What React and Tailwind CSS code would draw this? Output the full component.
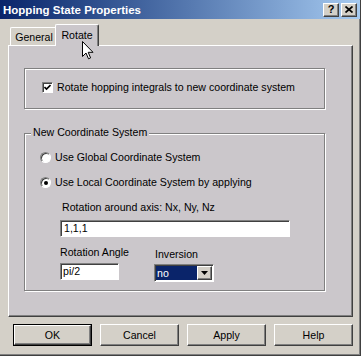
import React from 'react';

const raised =
  'border-t border-l border-white border-r border-b border-r-[#404040] border-b-[#404040] shadow-[inset_-1px_-1px_0_#808080]';
const sunken =
  'border-t border-l border-[#808080] border-r border-b border-r-white border-b-white shadow-[inset_1px_1px_0_#404040]';
const etched =
  'border border-[#808080] shadow-[1px_1px_0_#ffffff,inset_1px_1px_0_#ffffff]';

function TitleButton({ children }) {
  return (
    <div className={`w-[16px] h-[14px] bg-[#d4d0c8] flex items-center justify-center ${raised}`}>
      {children}
    </div>
  );
}

function Checkbox({ checked }) {
  return (
    <span className={`w-[11px] h-[11px] bg-white flex items-center justify-center shrink-0 ${sunken}`}>
      {checked && (
        <svg width="7" height="7" viewBox="0 0 7 7">
          <path d="M0.5 3 L2.5 5 L6.5 1" fill="none" stroke="#000" strokeWidth="1.6" />
        </svg>
      )}
    </span>
  );
}

function Radio({ checked }) {
  return (
    <span className="w-[11px] h-[11px] rounded-full bg-white border border-[#808080] border-r-white border-b-white shadow-[inset_1px_1px_0_#404040] flex items-center justify-center shrink-0">
      {checked && <span className="w-[4px] h-[4px] rounded-full bg-black" />}
    </span>
  );
}

function Button({ children, isDefault }) {
  return (
    <div className={`w-[79px] h-[22px] ${isDefault ? 'border border-black' : ''}`}>
      <div className={`w-full h-full flex items-center justify-center bg-[#d4d0c8] ${raised}`}>
        {children}
      </div>
    </div>
  );
}

export default function App() {
  return (
    <div className="relative w-[361px] h-[356px] overflow-hidden bg-[#d4d0c8] border-r border-b border-[#404040] shadow-[inset_-1px_-1px_0_#808080] flex flex-col font-['Liberation_Sans',Arial,sans-serif] text-[10.6px] leading-[13px] text-black">
      {/* Title bar */}
      <div className="h-[19px] shrink-0 flex items-center justify-between pl-[3px] pr-[3px] bg-linear-to-r from-[#0a246a] to-[#a6caf0]">
        <span className="text-white font-bold text-[11.5px] leading-[14px]">Hopping State Properties</span>
        <div className="flex gap-[2px]">
          <TitleButton>
            <span className="font-bold text-[11px] leading-[11px]">?</span>
          </TitleButton>
          <TitleButton>
            <svg width="8" height="7" viewBox="0 0 8 7">
              <path d="M0.5 0.5 L7.5 6.5 M7.5 0.5 L0.5 6.5" stroke="#000" strokeWidth="1.7" />
            </svg>
          </TitleButton>
        </div>
      </div>

      {/* Tabs */}
      <div className="relative z-10 mt-[5px] ml-[10px] -mb-px flex items-end">
        <div className="w-[47px] h-[18px] mb-px pt-[3px] flex justify-center border-t border-l border-white rounded-tl-[2px] bg-[#d4d0c8]">
          General
        </div>
        <div className="-ml-[2px] w-[44px] h-[22px] pt-[4px] flex justify-center border-t border-l border-white border-r border-r-[#404040] shadow-[inset_-1px_0_0_#808080] rounded-tl-[2px] rounded-tr-[2px] bg-[#cbc7cb]">
          Rotate
        </div>
      </div>

      {/* Panel */}
      <div className="ml-[8px] w-[345px] h-[272px] shrink-0 bg-[#cbc7cb] border-t border-l border-white border-r border-b border-r-[#404040] border-b-[#404040] shadow-[inset_-1px_-1px_0_#808080] flex flex-col">
        <div className={`mt-[22px] ml-[15px] w-[301px] h-[41px] pt-[12px] pl-[17px] ${etched}`}>
          <div className="flex items-center gap-[4px] h-[13px]">
            <Checkbox checked />
            <span>Rotate hopping integrals to new coordinate system</span>
          </div>
        </div>

        <div className={`relative mt-[24px] ml-[15px] w-[301px] h-[158px] pt-[17px] pl-[15px] ${etched}`}>
          <span className="absolute left-[6px] -top-[8px] px-[2px] bg-[#cbc7cb]">New Coordinate System</span>
          <div className="flex items-center gap-[4px] h-[13px]">
            <Radio />
            <span>Use Global Coordinate System</span>
          </div>
          <div className="mt-[12px] flex items-center gap-[4px] h-[13px]">
            <Radio checked />
            <span>Use Local Coordinate System by applying</span>
          </div>
          <div className="mt-[12px] ml-[22px]">Rotation around axis: Nx, Ny, Nz</div>
          <div className={`mt-[6px] ml-[20px] w-[230px] h-[17px] bg-white pl-[3px] flex items-center ${sunken}`}>
            1,1,1
          </div>
          <div className="mt-[9px] ml-[20px] flex">
            <div className="w-[59px] flex flex-col whitespace-nowrap">
              <span>Rotation Angle</span>
              <div className={`mt-[4px] w-[59px] h-[17px] bg-white pl-[2px] flex items-center ${sunken}`}>
                pi/2
              </div>
            </div>
            <div className="ml-[35px] pt-[2px] flex flex-col">
              <span className="pl-[1px]">Inversion</span>
              <div className={`mt-[3px] w-[60px] h-[18px] bg-white p-[1px] flex ${sunken}`}>
                <div className="flex-1 bg-[#0a246a] text-white pl-[1px] flex items-center">no</div>
                <div className={`w-[15px] bg-[#d4d0c8] flex items-center justify-center ${raised}`}>
                  <svg width="7" height="4" viewBox="0 0 7 4">
                    <path d="M0 0 H7 L3.5 4 Z" fill="#000" />
                  </svg>
                </div>
              </div>
            </div>
          </div>
        </div>
      </div>

      {/* Buttons */}
      <div className="mt-[7px] ml-[13px] flex gap-[8px]">
        <Button isDefault>OK</Button>
        <Button>Cancel</Button>
        <Button>Apply</Button>
        <Button>Help</Button>
      </div>

      {/* Mouse cursor */}
      <svg className="absolute left-[82px] top-[41px] z-20" width="12" height="19" viewBox="0 0 12 19">
        <path d="M0.5 0.5 L0.5 15.5 L4 12 L6.5 17.8 L8.6 16.9 L6.2 11.3 L11 11.3 Z" fill="#fff" stroke="#000" strokeWidth="1" />
      </svg>
    </div>
  );
}
